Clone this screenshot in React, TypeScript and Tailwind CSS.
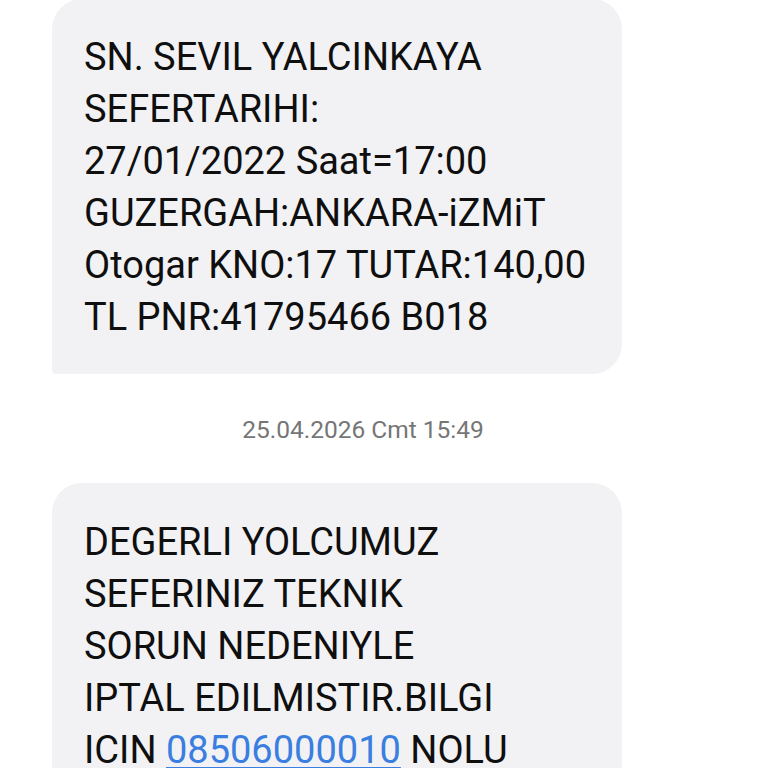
export default function App() {
  const font = { fontFamily: 'Roboto, "Noto Sans", sans-serif' };
  return (
    <div className="w-[768px] h-[768px] overflow-hidden bg-white" style={font}>
      <div className="flex flex-col pl-[52px]">
        <div className="w-[570px] bg-[#f2f2f4] rounded-tl-[30px] rounded-tr-[30px] rounded-br-[30px] rounded-bl-[4px] pl-[32px] pr-[10px] pt-[32px] pb-[31px] -mt-[1px]">
          <div className="text-[38px] leading-[52px] text-[#0f0f0f]">
            <div>SN. SEVIL YALCINKAYA</div>
            <div>SEFERTARIHI:</div>
            <div>27/01/2022 Saat=17:00</div>
            <div>GUZERGAH:ANKARA-iZMiT</div>
            <div className="whitespace-nowrap">Otogar KNO:17 TUTAR:140,00</div>
            <div>TL PNR:41795466 B018</div>
          </div>
        </div>
        <div className="w-[622px] h-[109px] flex items-center justify-center text-[24.5px] text-[#767676] pt-[4px]">
          <span>25.04.2026 Cmt 15:49</span>
        </div>
        <div className="w-[570px] bg-[#f2f2f4] rounded-tl-[30px] rounded-tr-[30px] pl-[32px] pr-[10px] pt-[33px] pb-[40px]">
          <div className="text-[38px] leading-[52px] text-[#0f0f0f]">
            <div>DEGERLI YOLCUMUZ</div>
            <div>SEFERINIZ TEKNIK</div>
            <div>SORUN NEDENIYLE</div>
            <div>IPTAL EDILMISTIR.BILGI</div>
            <div className="whitespace-nowrap">
              ICIN <span className="text-[#3a7ee0] underline decoration-[2px] underline-offset-[4px]">08506000010</span> NOLU
            </div>
          </div>
        </div>
      </div>
    </div>
  );
}
